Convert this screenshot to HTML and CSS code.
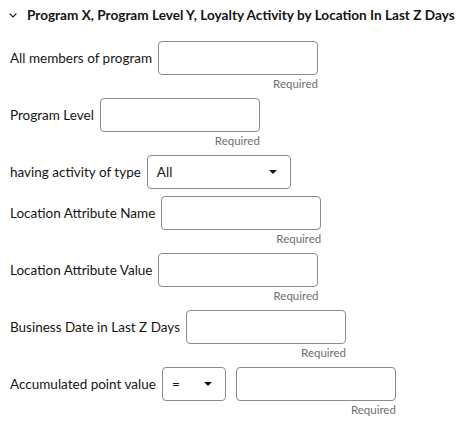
FILE: index.html
```html
<!DOCTYPE html>
<html>
<head>
<meta charset="utf-8">
<link rel="stylesheet" href="styles.css">
</head>
<body>
<div class="panel">
  <div class="header">
    <svg class="chev" width="8" height="5" viewBox="0 0 8 5"><path d="M0.6 0.6 L4 4 L7.4 0.6" fill="none" stroke="#161513" stroke-width="1.2"/></svg>
    <span class="title">Program X, Program Level Y, Loyalty Activity by Location In Last Z Days</span>
  </div>
  <div class="rows">
    <div class="row">
      <label class="label">All members of program</label>
      <div class="field"><div class="input"></div><div class="req">Required</div></div>
    </div>
    <div class="row">
      <label class="label">Program Level</label>
      <div class="field"><div class="input"></div><div class="req">Required</div></div>
    </div>
    <div class="row">
      <label class="label">having activity of type</label>
      <div class="field"><div class="select wide"><span>All</span><svg width="8" height="4" viewBox="0 0 8 4"><path d="M0 0 H8 L4 4 Z" fill="#161513"/></svg></div></div>
    </div>
    <div class="row">
      <label class="label">Location Attribute Name</label>
      <div class="field"><div class="input"></div><div class="req">Required</div></div>
    </div>
    <div class="row">
      <label class="label">Location Attribute Value</label>
      <div class="field"><div class="input"></div><div class="req">Required</div></div>
    </div>
    <div class="row">
      <label class="label">Business Date in Last Z Days</label>
      <div class="field"><div class="input"></div><div class="req">Required</div></div>
    </div>
    <div class="row">
      <label class="label">Accumulated point value</label>
      <div class="field"><div class="select small"><span>=</span><svg width="8" height="4" viewBox="0 0 8 4"><path d="M0 0 H8 L4 4 Z" fill="#161513"/></svg></div></div>
      <div class="field gap"><div class="input"></div><div class="req">Required</div></div>
    </div>
  </div>
</div>
</body>
</html>
```

FILE: styles.css
```css
html, body {
  margin: 0;
  padding: 0;
  background: #ffffff;
}
body {
  font-family: Lato, "Noto Sans", sans-serif;
  color: #161513;
}
.panel {
  padding: 6px 0 0 10px;
}
.header {
  display: flex;
  align-items: center;
  height: 17px;
  margin-bottom: 18px;
}
.chev {
  flex-shrink: 0;
  margin-left: -1px;
  margin-right: 10px;
  margin-top: 1px;
}
.title {
  font-weight: bold;
  font-size: 13.6px;
  white-space: nowrap;
}
.rows {
  display: flex;
  flex-direction: column;
  gap: 7px;
}
.row {
  display: flex;
  align-items: flex-start;
}
.label {
  font-size: 13.5px;
  line-height: 34px;
  height: 34px;
  margin-right: 6px;
  white-space: nowrap;
}
.field {
  display: flex;
  flex-direction: column;
}
.field.gap {
  margin-left: 10px;
}
.input {
  width: 158px;
  height: 32px;
  border: 1px solid #8c8b8a;
  border-radius: 4px;
}
.req {
  font-size: 11.5px;
  line-height: 14px;
  height: 14px;
  padding-top: 2px;
  text-align: right;
  color: #6f6e6d;
}
.select {
  height: 32px;
  border: 1px solid #8c8b8a;
  border-radius: 4px;
  display: flex;
  align-items: center;
  justify-content: space-between;
  font-size: 13.5px;
  padding: 0 13px 0 9px;
}
.select.wide { width: 120px; }
.select.small { width: 40px; }
```
